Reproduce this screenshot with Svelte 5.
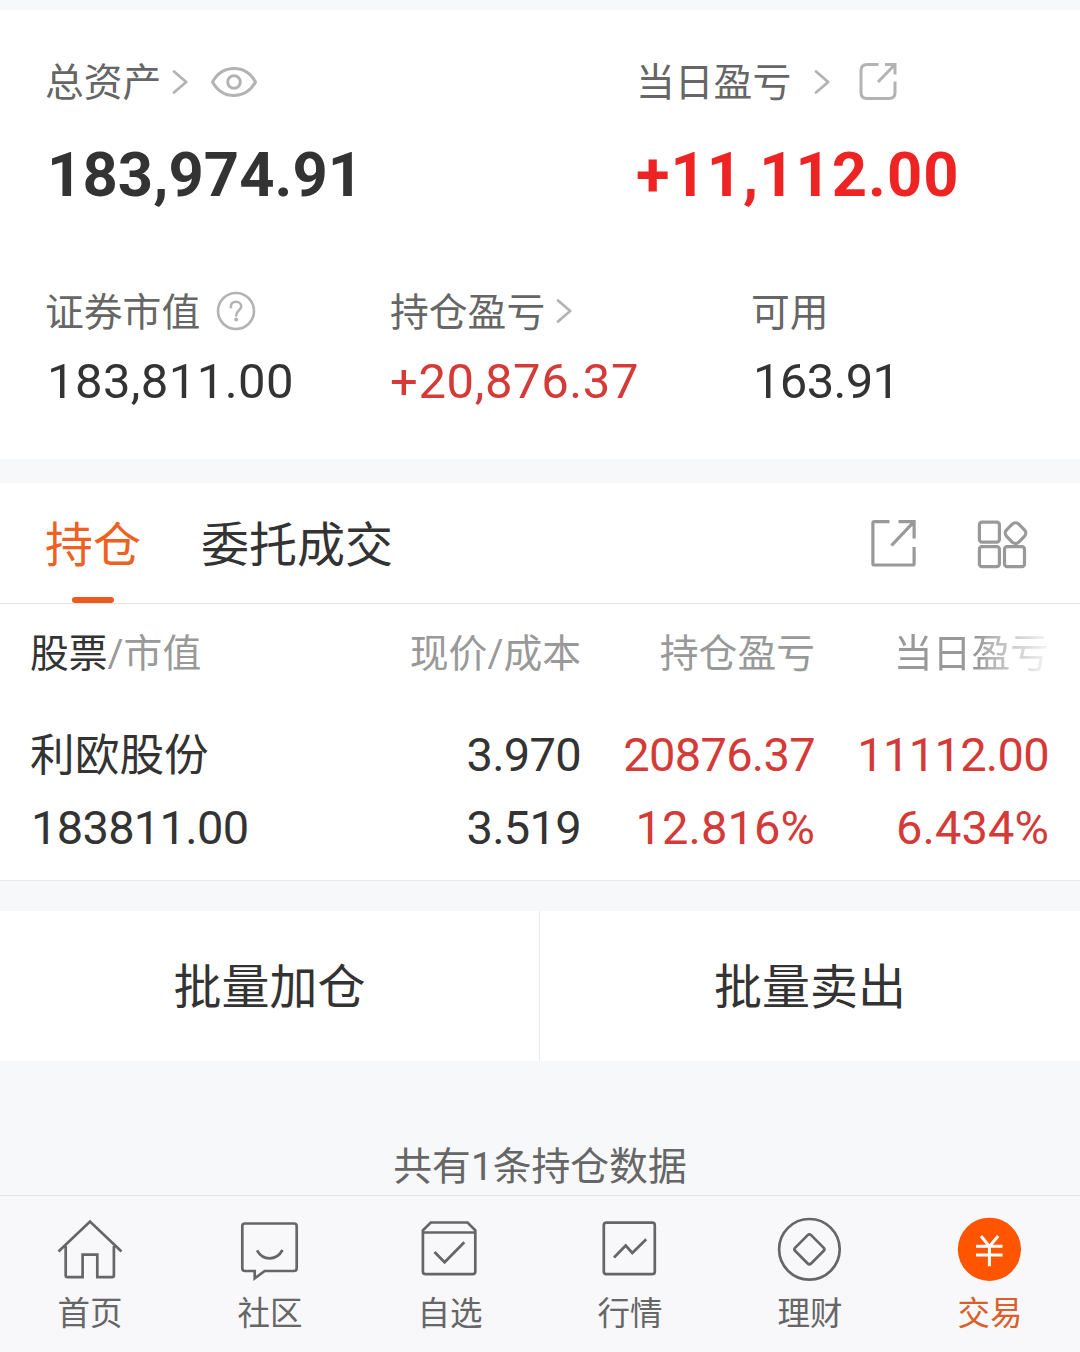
<script>
  const nav = [
    { id: 'home', label: '首页' },
    { id: 'community', label: '社区' },
    { id: 'watch', label: '自选' },
    { id: 'market', label: '行情' },
    { id: 'wealth', label: '理财' },
    { id: 'trade', label: '交易' }
  ];
  const holdings = [
    {
      name: '利欧股份', value: '183811.00', price: '3.970', cost: '3.519',
      profit: '20876.37', profitRate: '12.816%', today: '11112.00', todayRate: '6.434%'
    }
  ];
</script>

{#snippet chevron()}
  <svg class="chevron" width="18" height="28" viewBox="0 0 18 28"><path d="M3 3.5 15.2 14 3 24.5" /></svg>
{/snippet}

<div class="page">
  <section class="assets">
    <div class="row main">
      <div class="cell">
        <div class="label">
          <span>总资产</span>
          {@render chevron()}
          <svg class="eye" width="48" height="34" viewBox="0 0 48 34">
            <path d="M2.5 17C7.5 8 15 3.500 24 3.500S40.500 8 45.500 17C40.500 26 33 30.500 24 30.500S7.500 26 2.500 17Z" />
            <circle cx="24" cy="17" r="6.300" />
          </svg>
        </div>
        <div class="num big total">183,974.91</div>
      </div>
      <div class="cell">
        <div class="label">
          <span>当日盈亏</span>
          <span class="spread">{@render chevron()}</span>
          <svg class="share" width="40" height="40" viewBox="0 0 40 40">
            <path d="M20.500 3.500H9Q3 3.500 3 9.500V31.500Q3 37.500 9 37.500H31Q37 37.500 37 31.500V20.500" />
            <path d="M27 3.500H37V13.500M37 3.500 20 21" />
          </svg>
        </div>
        <div class="num big gain">+11,112.00</div>
      </div>
    </div>
    <div class="row detail">
      <div class="cell">
        <div class="label">
          <span>证券市值</span>
          <svg class="help" width="40" height="40" viewBox="0 0 40 40">
            <circle cx="20" cy="20" r="18" />
            <path d="M14.800 16.200C14.800 12.500 17 10.800 20 10.800S25.200 12.700 25.200 15.500C25.200 19 20.200 19.500 20.200 24.500" />
            <circle class="dot" cx="20.200" cy="28.600" r="2" />
          </svg>
        </div>
        <div class="num mid">183,811.00</div>
      </div>
      <div class="cell">
        <div class="label"><span>持仓盈亏</span>{@render chevron()}</div>
        <div class="num mid loss">+20,876.37</div>
      </div>
      <div class="cell">
        <div class="label"><span>可用</span></div>
        <div class="num mid free">163.91</div>
      </div>
    </div>
  </section>

  <section class="positions">
    <div class="tabs">
      <span class="tab active">持仓</span>
      <span class="tab">委托成交</span>
      <div class="tools">
        <svg width="52" height="52" viewBox="0 0 52 52">
          <path d="M21.500 4.600H6.500Q4.900 4.600 4.900 6.200V46.400Q4.900 48 6.500 48H44.500Q46.100 48 46.100 46.400V30" />
          <path d="M30.500 4.600H46.100V21.500M46.100 4.600 23.500 28.500" />
        </svg>
        <svg width="52" height="52" viewBox="0 0 52 52">
          <rect x="3.400" y="5.100" width="20" height="20" rx="2.600" />
          <rect x="3.400" y="29.600" width="20" height="20" rx="2.600" />
          <rect x="28.500" y="29.600" width="20" height="20" rx="2.600" />
          <rect x="30.900" y="7.500" width="17.200" height="17.200" rx="4.600" transform="rotate(45 39.500 16.100)" />
        </svg>
      </div>
    </div>

    <div class="grid head">
      <span><b>股票</b>/市值</span>
      <span>现价/成本</span>
      <span>持仓盈亏</span>
      <span class="fade">当日盈亏</span>
    </div>
    {#each holdings as h}
      <div class="grid line num">
        <span class="name">{h.name}</span>
        <span>{h.price}</span>
        <span class="loss">{h.profit}</span>
        <span class="loss">{h.today}</span>
        <span class="value">{h.value}</span>
        <span>{h.cost}</span>
        <span class="loss rate">{h.profitRate}</span>
        <span class="loss rate">{h.todayRate}</span>
      </div>
    {/each}
  </section>

  <div class="actions">
    <button>批量加仓</button>
    <button>批量卖出</button>
  </div>

  <p class="summary">共有1条持仓数据</p>

  <nav>
    {#each nav as item}
      <div class="item" class:on={item.id === 'trade'}>
        <svg width="66" height="66" viewBox="0 0 66 66">
          {#if item.id === 'home'}
            <path d="M1.500 35.500 33 5.500 64.500 35.500M8.700 30V59.500Q8.700 61.200 10.400 61.200H25.600V38.700H40.300V61.200H55.200Q56.900 61.200 56.900 59.500V30" />
          {:else if item.id === 'community'}
            <path d="M8 7.500H57Q59.700 7.500 59.700 10.200V52.300Q59.700 55 57 55H27.700L17.700 62.300V55H8Q5.300 55 5.300 52.300V10.200Q5.300 7.500 8 7.500Z" />
            <path d="M20 34.300C26 45 39.500 45 45.500 34" />
          {:else if item.id === 'watch'}
            <path d="M5.900 16.500H58.300V55.500Q58.300 58.200 55.600 58.200H8.600Q5.900 58.200 5.900 55.500ZM5.900 16.500V14.300L13.800 6.500H50.500L58.300 14.300V16.500" />
            <path d="M17.500 36 27.600 46.300 47.300 26.300" />
          {:else if item.id === 'market'}
            <rect x="6.800" y="6.600" width="51" height="51.500" rx="2.600" />
            <path d="M17 41.500 28.700 29.500 35.300 37 49.200 23.200" />
          {:else if item.id === 'wealth'}
            <circle cx="32.400" cy="33.300" r="30.300" />
            <rect x="21.200" y="22.100" width="22.400" height="22.400" rx="2.400" transform="rotate(45 32.400 33.300)" />
          {:else}
            <circle class="coin" cx="32.400" cy="33.300" r="31.600" />
            <path class="yen" d="M24 20 32.400 30.500 41.200 20M19 30.200H45.500M19 38.900H45.500M32.400 30V50.300" />
          {/if}
        </svg>
        <span>{item.label}</span>
      </div>
    {/each}
  </nav>
</div>

<style>
  :global(body) {
    margin: 0;
    background: #f7f8fa;
  }
  .page {
    width: 1080px;
    height: 1352px;
    box-sizing: border-box;
    padding-top: 10px;
    display: flex;
    flex-direction: column;
    overflow: hidden;
    background: #f7f8fa;
    color: #333;
    font-family: Roboto, "Noto Sans CJK SC", sans-serif;
  }
  svg {
    display: block;
    flex: none;
    fill: none;
    stroke: currentColor;
  }
  .assets {
    box-sizing: border-box;
    height: 449px;
    padding: 53px 0 0 45px;
    background: #fff;
  }
  .row {
    display: grid;
  }
  .main {
    grid-template-columns: 591px 1fr;
  }
  .detail {
    grid-template-columns: 345px 361px 1fr;
    margin-top: 88px;
  }
  .label {
    display: flex;
    align-items: center;
    height: 40px;
    font-size: 38.8px;
    line-height: 40px;
    color: #666;
  }
  .label svg {
    color: #b3b3b3;
    stroke-width: 3;
    stroke-linecap: round;
    stroke-linejoin: round;
    margin-bottom: 2px;
  }
  .detail .label svg {
    margin-bottom: 4px;
  }
  .label .chevron {
    margin-left: 10px;
    stroke-width: 2.8;
  }
  .spread {
    margin-left: 12px;
  }
  .eye {
    margin-left: 21px;
  }
  .label .share {
    margin-left: 27px;
    margin-bottom: 4px;
  }
  .share path {
    stroke-linecap: butt;
    stroke-linejoin: miter;
  }
  .label .help {
    margin-left: 16px;
    stroke-width: 2.6;
  }
  .help .dot {
    fill: #b3b3b3;
    stroke: none;
  }
  .num {
    white-space: nowrap;
  }
  .big {
    margin-top: 42px;
    font-size: 61.5px;
    font-weight: 700;
    line-height: 60px;
    letter-spacing: 1px;
  }
  .total {
    padding-left: 2px;
    letter-spacing: 0.1px;
  }
  .mid {
    margin-top: 19px;
    padding-left: 2px;
    font-size: 49px;
    line-height: 60px;
    letter-spacing: 0.4px;
  }
  .mid.loss {
    padding-left: 0;
    letter-spacing: 0.6px;
  }
  .free {
    letter-spacing: -0.7px;
  }
  .gain {
    color: #ee2424;
  }
  .loss {
    color: #d43a37;
  }
  .positions {
    box-sizing: border-box;
    height: 398px;
    margin-top: 24px;
    background: #fff;
    border-bottom: 1px solid #e8e8e8;
  }
  .tabs {
    display: flex;
    height: 120px;
    padding: 0 52px 0 45px;
    border-bottom: 1px solid #e3e3e3;
  }
  .tab {
    position: relative;
    margin-right: 60px;
    padding-top: 3px;
    font-size: 48px;
    line-height: 120px;
    height: 117px;
  }
  .active {
    color: #ee6123;
  }
  .active::after {
    content: "";
    position: absolute;
    left: 27px;
    bottom: 0;
    width: 42px;
    height: 6px;
    border-radius: 3px;
    background: #ee5a1e;
  }
  .tools {
    display: flex;
    gap: 56px;
    align-items: center;
    margin-left: auto;
    color: #999;
    stroke-width: 3.2;
  }
  .grid {
    display: grid;
    grid-template-columns: 351px 200px 234px 234px;
    padding: 0 31px 0 30px;
    text-align: right;
  }
  .grid > :nth-child(4n + 1) {
    text-align: left;
  }
  .head {
    height: 50px;
    padding-top: 25px;
    padding-bottom: 39px;
    font-size: 38.8px;
    line-height: 50px;
    color: #999;
  }
  .head b {
    font-weight: 400;
    color: #333;
  }
  .fade {
    mask-image: linear-gradient(90deg, #000 70%, rgba(0, 0, 0, 0.75) 75%, rgba(0, 0, 0, 0.1) 100%);
  }
  .line {
    grid-auto-rows: 73px;
    font-size: 47px;
    line-height: 73px;
    letter-spacing: -0.7px;
  }
  .line .name {
    padding-top: 2px;
    font-size: 44.7px;
    letter-spacing: 0;
  }
  .line .value {
    padding-left: 1px;
  }
  .line .rate {
    letter-spacing: 0.1px;
  }
  .actions {
    display: grid;
    grid-template-columns: 539px 1fr;
    height: 150px;
    margin-top: 30px;
    background: #fff;
  }
  button {
    margin: 0;
    padding: 3px 0 0;
    border: 0;
    background: none;
    font: inherit;
    font-size: 48px;
    line-height: 147px;
    color: #333;
  }
  button + button {
    border-left: 1px solid #eaebed;
  }
  .summary {
    margin: 0;
    padding-top: 81px;
    height: 53px;
    font-size: 38.8px;
    line-height: 50px;
    text-align: center;
    color: #666;
  }
  nav {
    display: grid;
    grid-template-columns: repeat(6, 180px);
    height: 157px;
    box-sizing: border-box;
    border-top: 1px solid #e3e4e7;
    background: #f8f8fb;
  }
  .item {
    display: flex;
    flex-direction: column;
    align-items: center;
    padding-top: 20px;
    font-size: 32.5px;
    line-height: 40px;
    color: #666;
  }
  .item svg {
    stroke-width: 2.7;
    margin-bottom: 12px;
  }
  .on span {
    color: #d9602a;
  }
  .coin {
    fill: #ff5500;
    stroke: none;
  }
  .yen {
    stroke: #fff;
    stroke-width: 3;
  }
</style>
